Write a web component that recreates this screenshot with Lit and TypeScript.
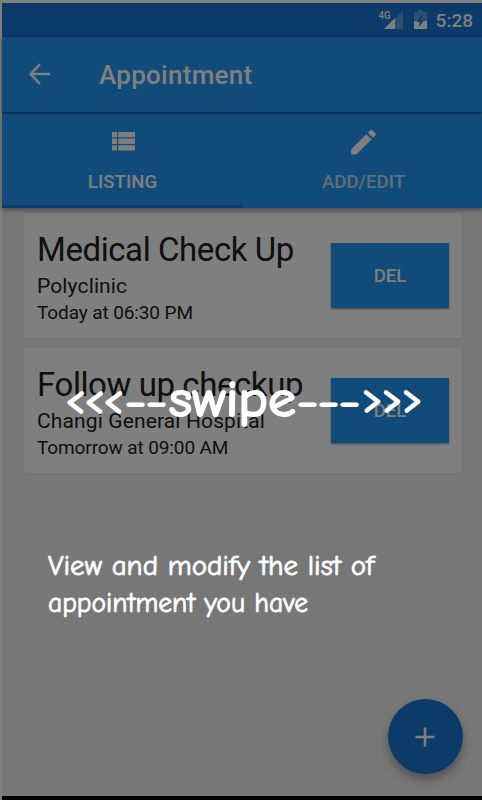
import { LitElement, html, svg, css } from "lit";
import { customElement, property } from "lit/decorators.js";

interface Appointment {
  title: string;
  place: string;
  time: string;
}

const APPOINTMENTS: Appointment[] = [
  { title: "Medical Check Up", place: "Polyclinic", time: "Today at 06:30 PM" },
  { title: "Follow up checkup", place: "Changi General Hospital", time: "Tomorrow at 09:00 AM" },
];

@customElement("appointment-card")
export class AppointmentCard extends LitElement {
  @property({ attribute: false }) item!: Appointment;

  static styles = css`
    :host {
      display: flex;
      justify-content: space-between;
      box-sizing: border-box;
      height: 125px;
      padding: 0 13px;
      background: #fff;
      border-radius: 3px;
      box-shadow: 0 0 2px rgba(0, 0, 0, 0.08);
      color: #202020;
      white-space: nowrap;
    }
    .info {
      padding-top: 17px;
    }
    .title {
      font-size: 33px;
      line-height: 40px;
      letter-spacing: -0.42px;
    }
    .place {
      font-size: 21px;
      line-height: 32px;
      letter-spacing: 0.13px;
    }
    .time {
      font-size: 19px;
      line-height: 21px;
      letter-spacing: -0.11px;
    }
    .del {
      align-self: flex-start;
      margin-top: 30px;
      width: 118px;
      height: 65px;
      padding: 0;
      border: 0;
      background: #2196f3;
      color: #fff;
      font: 500 18.5px Roboto, sans-serif;
      box-shadow: 0 1px 2px rgba(0, 0, 0, 0.45);
    }
  `;

  render() {
    return html`
      <div class="info">
        <div class="title">${this.item.title}</div>
        <div class="place">${this.item.place}</div>
        <div class="time">${this.item.time}</div>
      </div>
      <button class="del">DEL</button>
    `;
  }
}

@customElement("app-root")
export class AppRoot extends LitElement {
  static styles = css`
    :host {
      display: block;
      position: relative;
      box-sizing: border-box;
      width: 482px;
      height: 800px;
      padding: 3px 0 0 2px;
      overflow: hidden;
      background: #fff;
      font-family: Roboto, sans-serif;
    }
    svg {
      display: block;
    }
    .screen {
      display: flex;
      flex-direction: column;
      isolation: isolate;
      height: 797px;
      background: #eee;
    }
    .status {
      display: flex;
      align-items: center;
      justify-content: flex-end;
      height: 34px;
      flex: none;
      padding-right: 9px;
      background: #1976d2;
      color: #fff;
      font-size: 19px;
      font-weight: 500;
    }
    .status svg {
      margin-right: 8px;
    }
    .net {
      font: 500 10.5px Roboto, sans-serif;
    }
    .bar {
      display: flex;
      align-items: center;
      height: 75px;
      flex: none;
      z-index: 1;
      padding-left: 26px;
      background: #2196f3;
      color: #fff;
      box-shadow: 0 1px 3px rgba(0, 0, 0, 0.55);
    }
    .bar h1 {
      margin: 0 0 0 46px;
      font-size: 26px;
      font-weight: 500;
      line-height: 30px;
      letter-spacing: 0.27px;
    }
    .tabs {
      display: flex;
      height: 96px;
      flex: none;
      z-index: 0;
      background: #2196f3;
      color: #fff;
      box-shadow: 0 2px 5px rgba(0, 0, 0, 0.4);
    }
    .tab {
      display: flex;
      flex-direction: column;
      flex: none;
      align-items: center;
      box-sizing: border-box;
      width: 241px;
      height: 96px;
      padding-top: 15px;
      font-size: 18.5px;
      font-weight: 500;
      line-height: 22px;
      letter-spacing: 0.1px;
    }
    .icon {
      display: flex;
      justify-content: center;
      height: 28px;
      margin-bottom: 16px;
    }
    .tab.active {
      border-bottom: 3px solid #1976d2;
    }
    .tab:not(.active) .label {
      opacity: 0.7;
    }
    .list {
      display: flex;
      flex-direction: column;
      gap: 10px;
      flex: 1;
      padding: 5px 20px 0 22px;
    }
    .fab {
      position: absolute;
      left: 387.5px;
      top: 699px;
      display: flex;
      align-items: center;
      justify-content: center;
      width: 75px;
      height: 75px;
      border-radius: 50%;
      background: #1976d2;
      box-shadow: 0 6px 9px rgba(0, 0, 0, 0.3);
    }
    .foot {
      height: 4px;
      flex: none;
      background: #000;
    }
    .scrim {
      position: absolute;
      inset: 0;
      z-index: 2;
      background: rgba(0, 0, 0, 0.5);
    }
    .hint {
      font-family: "Comic Sans MS", "Comic Neue", Lato, sans-serif;
      fill: #fff;
      stroke: #fff;
      stroke-linejoin: round;
      stroke-linecap: round;
    }
    .swipe {
      font-size: 43px;
      font-weight: 500;
      stroke-width: 2px;
    }
    .word {
      font-size: 50px;
      font-weight: 500;
      stroke-width: 2px;
    }
    .message {
      font-size: 27.5px;
      font-weight: 500;
      stroke-width: 0.8px;
    }
  `;

  private hint(text: string, x: number, y: number, width: number, kind: string) {
    return svg`<text class="hint ${kind}" x=${x} y=${y} textLength=${width} lengthAdjust="spacingAndGlyphs">${text}</text>`;
  }

  render() {
    return html`
      <div class="screen">
        <div class="status">
          <svg width="50" height="24" viewBox="0 0 50 24">
            <text class="net" x="0.5" y="11" fill="#fff" textLength="12" lengthAdjust="spacingAndGlyphs">4G</text>
            <path d="M6 21 25 3V21Z" fill="#fff" opacity=".3" />
            <path d="M6 21 17 10V21Z" fill="#fff" />
            <path d="M36 21V4H40V2H45V4H49V21Z" fill="#fff" opacity=".3" />
            <path d="M36 13H49V21H36Z" fill="#fff" />
            <path d="M44.5 6 38.5 14H42L40.5 19.5 46.5 12H43Z" fill="#1976d2" />
          </svg>
          <span>5:28</span>
        </div>
        <div class="bar">
          <svg width="25" height="24" viewBox="0 0 25 24" fill="none" stroke="#fff" stroke-width="2.4">
            <path d="M22 11H3M12 1.2 2.5 11 12 20.8" />
          </svg>
          <h1>Appointment</h1>
        </div>
        <div class="tabs">
          <div class="tab active">
            <div class="icon">
              <svg width="28" height="28" viewBox="0 0 28 28" fill="#fff">
                <path d="M3 5H8V10.2H3ZM9.2 5H26V10.2H9.2ZM3 11.6H8V17H3ZM9.2 11.6H26V17H9.2ZM3 18.3H8V23.6H3ZM9.2 18.3H26V23.6H9.2Z" />
              </svg>
            </div>
            <span class="label">LISTING</span>
          </div>
          <div class="tab">
            <div class="icon">
              <svg width="33" height="33" viewBox="0 0 24 24" fill="#fff">
                <path d="M3 16.25V20h3.75L17.81 8.94l-3.75-3.75L3 16.25zM20.71 6.04a1 1 0 0 0 0-1.41l-2.34-2.34a1 1 0 0 0-1.41 0l-1.83 1.83 3.75 3.75 1.83-1.83z" />
              </svg>
            </div>
            <span class="label">ADD/EDIT</span>
          </div>
        </div>
        <div class="list">
          ${APPOINTMENTS.map((a) => html`<appointment-card .item=${a}></appointment-card>`)}
        </div>
        <div class="foot"></div>
      </div>
      <div class="fab">
        <svg width="20" height="20" viewBox="0 0 20 20" stroke="#fff" stroke-width="2.6">
          <path d="M10 .5V19.5M.5 10H19.5" />
        </svg>
      </div>
      <div class="scrim">
        <svg width="482" height="800" viewBox="0 0 482 800">
          ${this.hint("<<<", 66, 413, 57, "swipe")}
          ${this.hint("--", 125, 415, 42, "swipe")}
          ${this.hint("swipe", 169, 415.5, 127, "word")}
          ${this.hint("---", 297, 415, 63, "swipe")}
          ${this.hint(">>>", 362, 412, 60, "swipe")}
          ${this.hint("View and modify the list of", 48, 575, 326, "message")}
          ${this.hint("appointment you have", 48, 612, 260, "message")}
        </svg>
      </div>
    `;
  }
}
